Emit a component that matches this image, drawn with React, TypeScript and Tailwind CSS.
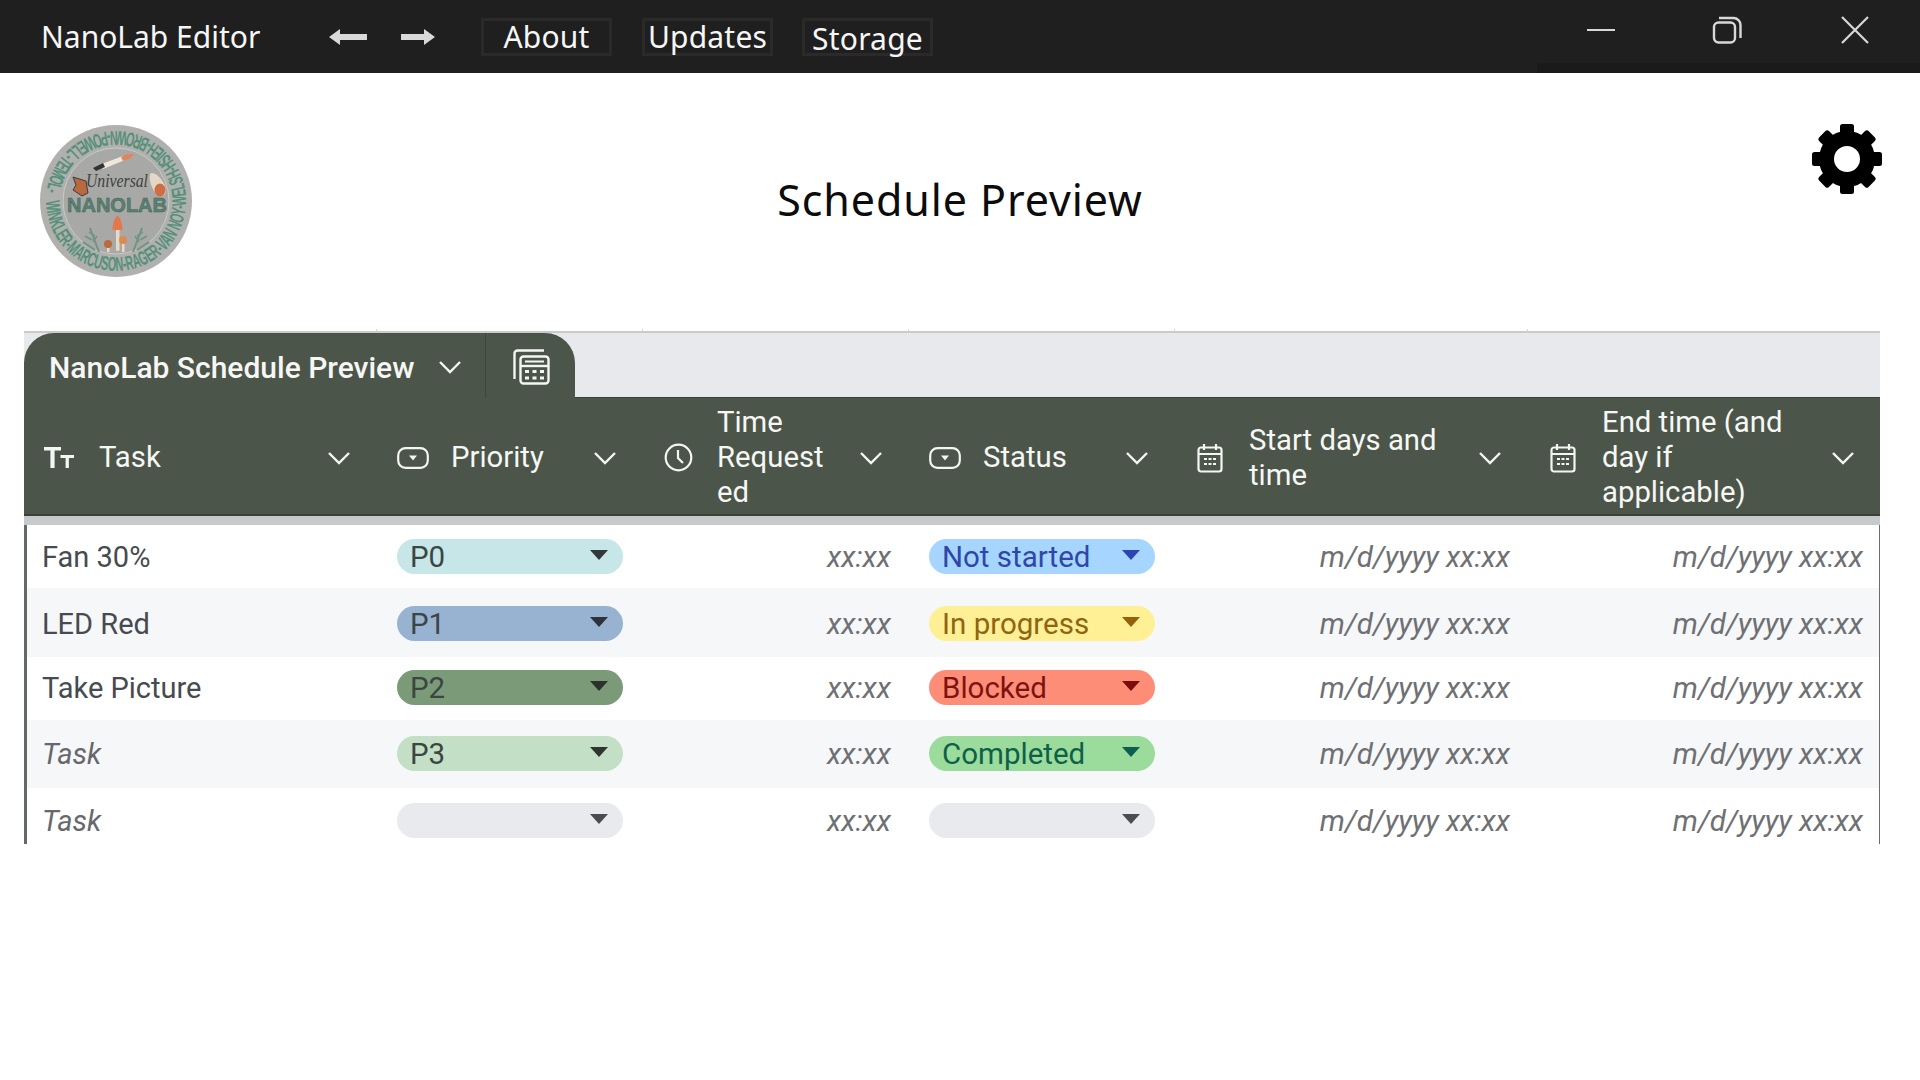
import React from "react";

const plex = "[font-family:'Noto_Sans','Open_Sans',sans-serif]";

function Chevron() {
  return (
    <svg width="24" height="14" viewBox="0 0 24 14" fill="none" stroke="#f4f6f3" strokeWidth="2.400" className="shrink-0">
      <path d="M2 2l10 10L22 2" />
    </svg>
  );
}

function TextIcon() {
  return (
    <svg width="30" height="22" viewBox="0 0 30 22" fill="#f4f6f3" className="-ml-[2px]">
      <path d="M0 0h17v3.400h-6.400V21H6.400V3.400H0z" />
      <path d="M16.500 8H30v3h-5.100v10h-3.300V11h-5.100z" />
    </svg>
  );
}

function DropIcon() {
  return (
    <svg width="32" height="22" viewBox="0 0 32 22" fill="none" className="-ml-px">
      <path d="M1.200 8.500a7.300 7.300 0 0 1 7.300-7.300h15a7.300 7.300 0 0 1 7.300 7.300v5a7.300 7.300 0 0 1-7.300 7.300h-15a7.300 7.300 0 0 1-7.300-7.300z" stroke="#f4f6f3" strokeWidth="2.200" />
      <path d="M12 8.500h8l-4 5z" fill="#f4f6f3" />
    </svg>
  );
}

function ClockIcon() {
  return (
    <svg width="29" height="29" viewBox="0 0 29 29" fill="none" stroke="#f4f6f3" strokeWidth="2.200">
      <circle cx="14.500" cy="14.500" r="12.800" />
      <path d="M14 7v8l5 5" />
    </svg>
  );
}

function CalendarIcon() {
  return (
    <svg width="26" height="30" viewBox="0 0 26 30" fill="none" stroke="#f4f6f3" strokeWidth="2.200" className="ml-px">
      <rect x="1.500" y="4.500" width="23" height="24" rx="2.500" />
      <path d="M1.500 11h23M7 1v6M19 1v6" />
      <path d="M7 16h3M11.500 16h3M16 16h3M7 21h3M11.500 21h3M16 21h3" strokeWidth="2" />
    </svg>
  );
}

function SheetIcon() {
  return (
    <svg width="37" height="36" viewBox="0 0 37 36" fill="none" stroke="#f4f6f3" strokeWidth="2.400">
      <path d="M31 1.500H4.500a3 3 0 0 0-3 3V30" />
      <rect x="7.500" y="7.500" width="28" height="27" rx="3" />
      <path d="M7.500 17h28" />
      <path d="M12 22.500h4M19.500 22.500h4M27 22.500h4M12 29h4M19.500 29h4M27 29h4" strokeWidth="3" />
      <path d="M12 12.500h19" strokeWidth="2" />
    </svg>
  );
}

function Gear() {
  const teeth = [0, 45, 90, 135, 180, 225, 270, 315];
  return (
    <svg width="70" height="70" viewBox="0 0 70 70" className="block">
      {teeth.map((a) => (
        <rect key={a} x="28" y="0" width="14" height="16" rx="2.500" fill="#000" transform={`rotate(${a} 35 35)`} />
      ))}
      <circle cx="35" cy="35" r="20.500" fill="none" stroke="#000" strokeWidth="15" />
    </svg>
  );
}

function Logo() {
  return (
    <svg width="154" height="154" viewBox="0 0 154 154" className="block shrink-0">
      <defs>
        <path id="ring" d="M7 77A70 70 0 0 0 147 77A70 70 0 0 0 7 77" />
      </defs>
      <circle cx="77" cy="77" r="76" fill="#b0b1ae" />
      <circle cx="77" cy="77" r="53" fill="#a8a9a6" stroke="#c9cbc7" strokeWidth="1" />
      <text fontFamily="'Liberation Sans',sans-serif" fontSize="20" fontWeight="700" fill="#56907a">
        <textPath href="#ring" textLength="430" lengthAdjust="spacingAndGlyphs">WINKLER-MARCUSON-RAGER-VAN NOY-WELSH-HSIEH-BROWN-POWELL-TEMOL-</textPath>
      </text>
      <path d="M60 41L84 32l2 4-22 9z" fill="#eee8dc" />
      <path d="M54 44l10-5 2 4-9 4z" fill="#333" />
      <path d="M82 33l7-3 6 0-3 4-8 3z" fill="#e0855c" />
      <path d="M34 53l13 4 2 12-6 3-9-6 3-5z" fill="#b9683f" stroke="#3a3f3c" strokeWidth="1" />
      <path d="M112 49c6 0 11 6 14 13 3 9-3 12-8 9-4-4-10-17-6-22z" fill="#e3d8c5" />
      <ellipse cx="121" cy="66" rx="5.500" ry="6.500" fill="#cf6e42" />
      <text x="78" y="63" textAnchor="middle" fontFamily="'Liberation Serif',serif" fontStyle="italic" fontSize="18" fill="#3c4340" textLength="62" lengthAdjust="spacingAndGlyphs">Universal</text>
      <text x="78" y="88" textAnchor="middle" fontFamily="'Liberation Sans',sans-serif" fontWeight="700" fontSize="20" fill="#5a8274" stroke="#3f5f55" strokeWidth="0.500" textLength="100" lengthAdjust="spacingAndGlyphs">NANOLAB</text>
      <path d="M60 128c-3-8-6-16-9-24M94 128c3-8 6-16 9-24M44 118l12 8M110 118l-12 8" stroke="#6e9484" strokeWidth="2" fill="none" />
      <path d="M50 108l6 4M46 112l7 4M54 118l4-6M104 108l-6 4M108 112l-7 4M100 118l-4-6" stroke="#6e9484" strokeWidth="1.500" fill="none" />
      <rect x="77" y="103" width="3.500" height="24" rx="1.500" fill="#ead9c4" />
      <path d="M73.500 106c0-7 3-14 5-14s5 7 5 14z" fill="#e2784b" />
      <rect x="83" y="118" width="2.500" height="10" fill="#ead9c4" />
      <circle cx="84" cy="116" r="4" fill="#dc8a55" />
      <rect x="68" y="122" width="2.500" height="6" fill="#ead9c4" />
      <circle cx="69" cy="120" r="4" fill="#b96a3f" />
    </svg>
  );
}

function NavBox({ label, offset }: { label: string; offset?: boolean }) {
  return (
    <div className={`h-[38px] w-[131px] border-[3px] border-[#2a2a2a] flex items-center justify-center text-[30px] tracking-[0.2px] text-[#f6f6f6] ${offset ? "pt-[3px]" : ""}`}>
      {label}
    </div>
  );
}

type Head = { icon: React.ReactNode; lines: string[] };

const heads: Head[] = [
  { icon: <TextIcon />, lines: ["Task"] },
  { icon: <DropIcon />, lines: ["Priority"] },
  { icon: <ClockIcon />, lines: ["Time", "Request", "ed"] },
  { icon: <DropIcon />, lines: ["Status"] },
  { icon: <CalendarIcon />, lines: ["Start days and", "time"] },
  { icon: <CalendarIcon />, lines: ["End time (and", "day if", "applicable)"] },
];

type Row = {
  task: string;
  italic?: boolean;
  h: string;
  grey?: boolean;
  p: string;
  pBg: string;
  pArrow: string;
  s: string;
  sBg: string;
  sText: string;
  sArrow: string;
};

const rows: Row[] = [
  { task: "Fan 30%", h: "h-[63px]", p: "P0", pBg: "bg-[#c6e6e8]", pArrow: "#33393b", s: "Not started", sBg: "bg-[#a6d6ff]", sText: "text-[#2f47a8]", sArrow: "#2b46b0" },
  { task: "LED Red", h: "h-[69px] pt-[2px]", grey: true, p: "P1", pBg: "bg-[#98b2d2]", pArrow: "#2d3338", s: "In progress", sBg: "bg-[#fff096]", sText: "text-[#8e6612]", sArrow: "#96610c" },
  { task: "Take Picture", h: "h-[63px] pb-[2px]", p: "P2", pBg: "bg-[#7b9b78]", pArrow: "#2b322b", s: "Blocked", sBg: "bg-[#fe8d78]", sText: "text-[#7d1310]", sArrow: "#7a0c0c" },
  { task: "Task", italic: true, h: "h-[68px] pb-[1px]", grey: true, p: "P3", pBg: "bg-[#c3dfc5]", pArrow: "#2f3632", s: "Completed", sBg: "bg-[#9bdb9c]", sText: "text-[#0e6048]", sArrow: "#0b5f50" },
  { task: "Task", italic: true, h: "h-[56px] pt-[9px]", p: "", pBg: "bg-[#e8eaed]", pArrow: "#4a4c4f", s: "", sBg: "bg-[#e8eaed]", sText: "", sArrow: "#4a4c4f" },
];

const ticks = ["left-[352px]", "left-[618px]", "left-[884px]", "left-[1150px]", "left-[1503px]"];

function Pill({ label, bg, text, arrow }: { label: string; bg: string; text: string; arrow: string }) {
  return (
    <div className={`h-[35px] w-[226px] rounded-full ${bg} ${text} flex items-center justify-between pl-[13px] pr-[15px] text-[29.500px] leading-[35px]`}>
      <span className="pt-[2px]">{label}</span>
      <svg width="18" height="10" viewBox="0 0 18 10" className="mb-[3px] shrink-0">
        <path d="M0 0h18L9 10z" fill={arrow} />
      </svg>
    </div>
  );
}

function Italic({ children, pr }: { children: React.ReactNode; pr: string }) {
  return <div className={`h-full flex items-center justify-end ${pr} italic text-[#6f7073] text-[29.500px] pt-[2px]`}>{children}</div>;
}

export default function App() {
  return (
    <div className="w-[1920px] h-[1080px] bg-white overflow-hidden">
      {/* title bar */}
      <div className={`relative h-[73px] bg-[#1f1f1f] flex items-center text-white ${plex}`}>
        <div className="pl-[41px] w-[329px] text-[30px] text-[#f6f6f6] whitespace-nowrap">NanoLab Editor</div>
        <svg width="38" height="20" viewBox="0 0 38 20" className="mr-[34px]">
          <path d="M0 10L11 2v5h27v6H11v5z" fill="#d9d9d9" />
        </svg>
        <svg width="34" height="20" viewBox="0 0 34 20" className="mr-[46px]">
          <path d="M34 10L23 2v5H0v6h23v5z" fill="#d9d9d9" />
        </svg>
        <NavBox label="About" />
        <div className="w-[30px]" />
        <NavBox label="Updates" />
        <div className="w-[29px]" />
        <NavBox label="Storage" offset />
        <div className="ml-auto flex items-center pr-[50px] pb-[13px]">
          <svg width="30" height="4" viewBox="0 0 30 4" className="mr-[96px]"><path d="M1 2h28" stroke="#d8d8d8" strokeWidth="2" /></svg>
          <svg width="30" height="28" viewBox="0 0 30 28" fill="none" stroke="#d8d8d8" strokeWidth="2.400" className="mr-[98px]">
            <rect x="2" y="6.500" width="21" height="20" rx="4.500" />
            <path d="M7 2h14.500a7 7 0 0 1 7 7v13" />
          </svg>
          <svg width="30" height="30" viewBox="0 0 30 30" stroke="#d8d8d8" strokeWidth="2.200"><path d="M2 2l26 26M28 2L2 28" /></svg>
        </div>
        <div className="absolute right-0 bottom-0 w-[383px] h-[10px] bg-[#1a1a1a]" />
      </div>

      {/* heading */}
      <div className="relative h-[258px] flex items-start pl-[39px] pt-[51px]">
        <Logo />
        <div className={`absolute left-0 right-0 top-[97px] text-center text-[43px] leading-[60px] tracking-[0.9px] text-[#0c0c0c] ${plex}`}>Schedule Preview</div>
        <div className="absolute right-[38px] top-[51px]">
          <Gear />
        </div>
      </div>

      {/* table */}
      <div className="mx-[24px] w-[1856px] [font-family:'Roboto',sans-serif]">
        <div className="relative h-[66px] border-t-2 border-[#c9cbca] bg-[#e8e9ec]">
          {ticks.map((t) => (
            <span key={t} className={`absolute -top-[4px] w-px h-[3px] bg-[#d4d5d4] ${t}`} />
          ))}
          <div className="absolute left-0 top-0 h-[65px] w-[551px] rounded-t-[30px] bg-[#4c5549] flex text-[#f6f7f4]">
            <div className="w-[462px] pl-[25px] pr-[23px] pt-[3px] flex items-center justify-between border-r border-[#3f473d] text-[30px] font-medium whitespace-nowrap">
              <span>NanoLab Schedule Preview</span>
              <Chevron />
            </div>
            <div className="flex-1 flex items-center pl-[27px] pt-[2px]">
              <SheetIcon />
            </div>
          </div>
        </div>

        <div className="grid grid-cols-[352px_266px_266px_266px_353px_353px] h-[119px] pt-[3px] bg-[#4c5549] border-t border-b-2 border-[#3a4238] text-[#f6f7f4] text-[29.300px] leading-[35px]">
          {heads.map((h, i) => (
            <div key={i} className="flex items-center pl-[22px] pr-[25px]">
              <div className="w-[54px] shrink-0 flex items-center">{h.icon}</div>
              <div className="flex-1 whitespace-nowrap -ml-px">
                {h.lines.map((l, j) => (
                  <div key={j}>{l}</div>
                ))}
              </div>
              <Chevron />
            </div>
          ))}
        </div>
        <div className="h-[9px] bg-[#c8c9cb]" />

        <div className="border-l-[3px] border-r border-l-[#626a63] border-r-[#6b6b6b]">
          {rows.map((r, i) => (
            <div key={i} className={`grid grid-cols-[349px_266px_266px_266px_353px_351px] ${r.h} ${r.grey ? "bg-[#f6f7f9]" : "bg-white"}`}>
              <div className={`flex items-center pl-[15px] pt-[2px] text-[29px] ${r.italic ? "italic text-[#66686b]" : "text-[#474b50]"}`}>{r.task}</div>
              <div className="flex items-center pl-[21px]">
                <Pill label={r.p} bg={r.pBg} text="text-[#3b4643]" arrow={r.pArrow} />
              </div>
              <Italic pr="pr-[17px]">xx:xx</Italic>
              <div className="flex items-center pl-[21px]">
                <Pill label={r.s} bg={r.sBg} text={r.sText} arrow={r.sArrow} />
              </div>
              <Italic pr="pr-[17px]">m/d/yyyy xx:xx</Italic>
              <Italic pr="pr-[15px]">m/d/yyyy xx:xx</Italic>
            </div>
          ))}
        </div>
      </div>
    </div>
  );
}
